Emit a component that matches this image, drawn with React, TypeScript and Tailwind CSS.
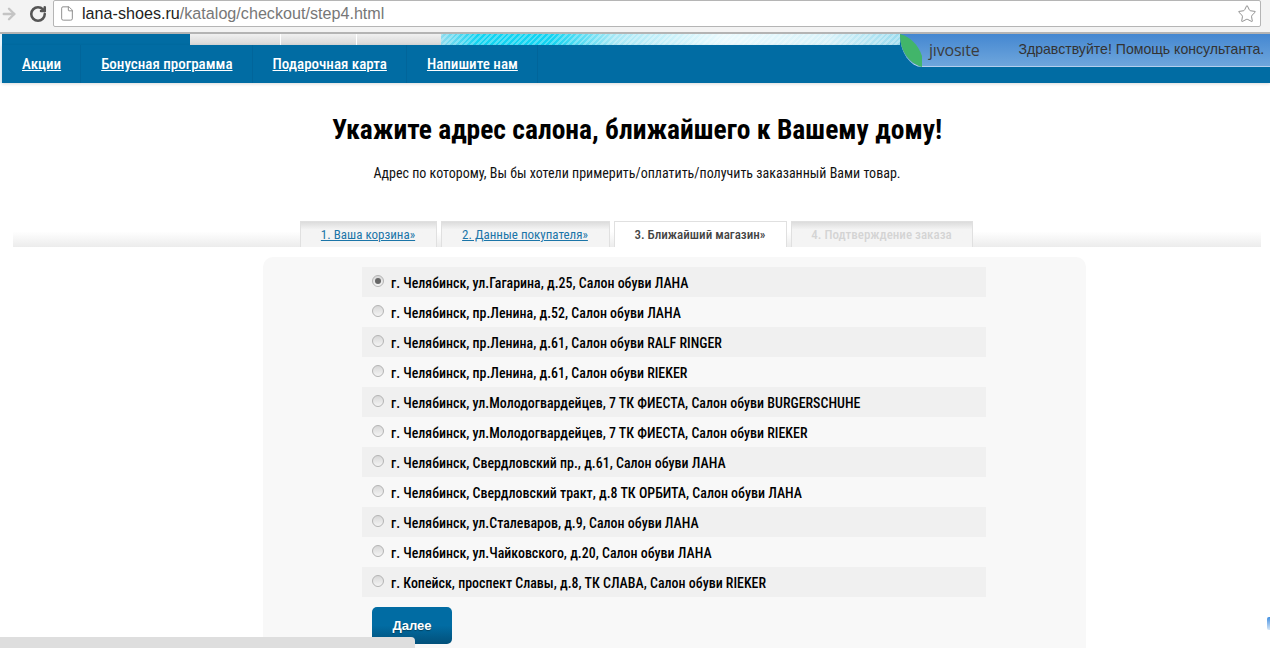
import React from "react";
import { ArrowRight, RotateCw, File, Star } from "lucide-react";

const nav = ["Акции", "Бонусная программа", "Подарочная карта", "Напишите нам"];

const shops = [
  "г. Челябинск, ул.Гагарина, д.25, Салон обуви ЛАНА",
  "г. Челябинск, пр.Ленина, д.52, Салон обуви ЛАНА",
  "г. Челябинск, пр.Ленина, д.61, Салон обуви RALF RINGER",
  "г. Челябинск, пр.Ленина, д.61, Салон обуви RIEKER",
  "г. Челябинск, ул.Молодогвардейцев, 7 ТК ФИЕСТА, Салон обуви BURGERSCHUHE",
  "г. Челябинск, ул.Молодогвардейцев, 7 ТК ФИЕСТА, Салон обуви RIEKER",
  "г. Челябинск, Свердловский пр., д.61, Салон обуви ЛАНА",
  "г. Челябинск, Свердловский тракт, д.8 ТК ОРБИТА, Салон обуви ЛАНА",
  "г. Челябинск, ул.Сталеваров, д.9, Салон обуви ЛАНА",
  "г. Челябинск, ул.Чайковского, д.20, Салон обуви ЛАНА",
  "г. Копейск, проспект Славы, д.8, ТК СЛАВА, Салон обуви RIEKER",
];

const App = () => {
  return (
    <div className="relative w-[1270px] h-[648px] overflow-hidden bg-white font-['Liberation_Sans_Narrow','Roboto_Condensed',Roboto,sans-serif]">
      {/* browser bar */}
      <div className="h-[34px] bg-[#f3f3f3] border-b-2 border-[#b4b4b4] flex items-center">
        <ArrowRight className="w-[18px] h-[18px] text-[#c4c4c4] -mt-[4px]" strokeWidth={3.2} />
        <RotateCw className="w-[18px] h-[18px] text-[#555] ml-[11px] -mt-[4px]" strokeWidth={3.4} />
        <div className="ml-[6px] -mt-[5px] w-[1208px] h-[27px] bg-white border border-[#b5b5b5] rounded-[2px] flex items-center font-['Liberation_Sans',sans-serif] text-[16.15px]">
          <File className="w-[16px] h-[17px] text-[#888] ml-[5px]" strokeWidth={1.4} />
          <span className="ml-[7px] text-[#222]">lana-shoes.ru</span>
          <span className="text-[#777]">/katalog/checkout/step4.html</span>
          <Star className="w-[20px] h-[20px] text-[#888] ml-auto mr-[3px]" strokeWidth={1.1} />
        </div>
      </div>

      {/* site header */}
      <div className="border-l-2 border-[#e9f6fd]">
        <div className="h-[11px] bg-[#016ca3] flex">
          <div className="w-[188px]" />
          <div className="w-[251px] flex gap-px bg-white">
            <div className="w-[90px] bg-gradient-to-b from-[#f0f0f0] to-[#d8d8d8]" />
            <div className="w-[75px] bg-gradient-to-b from-[#f0f0f0] to-[#d8d8d8]" />
            <div className="flex-1 bg-gradient-to-b from-[#f0f0f0] to-[#d8d8d8]" />
          </div>
          <div className="w-[459px] bg-[repeating-linear-gradient(135deg,rgba(255,255,255,0.28)_0px,rgba(255,255,255,0.28)_2px,transparent_2px,transparent_4px),linear-gradient(90deg,#8fdcef_0%,#12d4f2_8%,#12d4f2_24%,#a8e8f6_38%,#eafafe_62%,#d8f2f9_84%,#9adcef_100%)]" />
        </div>
        <nav className="relative h-[38px] bg-[#016ca3] flex text-white text-[15px] font-medium shadow-[0_1px_3px_rgba(0,0,0,0.15)]">
          {nav.map((item) => (
            <a key={item} href="#" className="flex items-center px-[20px] underline shadow-[inset_-1px_0_0_#01659a]">
              {item}
            </a>
          ))}
        </nav>
      </div>

      {/* jivosite label */}
      <div className="absolute left-[900px] top-[34px] w-[370px] h-[33px] rounded-bl-[22px_33px] bg-gradient-to-b from-[#4487d1] to-[#6ea6dc] border-b border-[#b4cfee] flex items-center font-['Liberation_Sans',sans-serif] text-[#333]">
        <svg className="absolute left-0 top-0" width="22" height="33" viewBox="0 0 22 33">
          <path d="M0 0 C0 16 8 29 22 33 L22 22 C18 10 10 3 0 0Z" fill="#42b56a" />
        </svg>
        <span className="ml-[29px] font-['Open_Sans',sans-serif] text-[16px] text-[#3c3c3c] tracking-[-0.2px]">jıvosıte</span>
        <span className="ml-[39px] text-[14.1px] whitespace-nowrap">Здравствуйте! Помощь консультанта.</span>
      </div>

      {/* page */}
      <div className="ml-[13px] mr-[9px] flex flex-col items-center">
        <h1 className="mt-[28px] text-[27.5px] leading-[38px] font-bold text-black">
          Укажите адрес салона, ближайшего к Вашему дому!
        </h1>
        <p className="mt-[15px] text-[14px] leading-[18px] text-[#111]">
          Адрес по которому, Вы бы хотели примерить/оплатить/получить заказанный Вами товар.
        </p>

        <div className="mt-[39px] w-full h-[26px] pr-[2px] bg-gradient-to-b from-white from-40% to-[#ececec] flex justify-center gap-[4px] text-[13px]">
          <div className="w-[137px] border border-b-0 border-[#e0e0e0] bg-gradient-to-b from-[#dcdcdc] to-[#f4f4f4] to-30% flex items-center justify-center text-[#1b75a8] underline">1. Ваша корзина»</div>
          <div className="w-[169px] border border-b-0 border-[#e0e0e0] bg-gradient-to-b from-[#dcdcdc] to-[#f4f4f4] to-30% flex items-center justify-center text-[#1b75a8] underline">2. Данные покупателя»</div>
          <div className="w-[173px] border border-b-0 border-[#e0e0e0] bg-white flex items-center justify-center font-medium text-[#444]">3. Ближайший магазин»</div>
          <div className="w-[182px] border border-b-0 border-[#e0e0e0] bg-gradient-to-b from-[#dcdcdc] to-[#f4f4f4] to-30% flex items-center justify-center font-medium text-[#d4d4d4]">4. Подтверждение заказа</div>
        </div>

        <div className="self-start mt-[10px] ml-[250px] w-[823px] h-[400px] bg-[#f8f8f8] rounded-[10px] pt-[10px] pl-[99px]">
          {shops.map((shop, i) => (
            <label key={shop} className={`flex items-center h-[30px] w-[624px] text-[13.95px] font-medium text-black ${i % 2 === 0 ? "bg-[#f0f0f0]" : ""}`}>
              <span className="ml-[10px] mr-[7px] -mt-[2px] w-[12px] h-[12px] rounded-full border border-[#b4b4b4] bg-gradient-to-b from-[#d8d8d8] to-[#f4f4f4] flex items-center justify-center">
                {i === 0 && <span className="w-[6px] h-[6px] rounded-full bg-[#666]" />}
              </span>
              <span className="pt-[2px]">{shop}</span>
            </label>
          ))}
          <button className="ml-[10px] mt-[10px] w-[80px] h-[37px] rounded-[5px] bg-gradient-to-b from-[#016ca3] from-50% to-[#02507a] text-white text-[13px] font-bold font-['Liberation_Sans',sans-serif] [text-shadow:0_1px_1px_#02405f]">
            Далее
          </button>
        </div>
      </div>

      {/* status bubble */}
      <div className="absolute left-0 bottom-0 w-[415px] h-[11px] bg-[#dedede] rounded-tr-[4px]" />
      <div className="absolute right-0 top-[617px] w-[3px] h-[13px] rounded-l-[2px] bg-gradient-to-b from-[#3f8fe0] to-[#d6e6f5]" />
    </div>
  );
};

export default App;
